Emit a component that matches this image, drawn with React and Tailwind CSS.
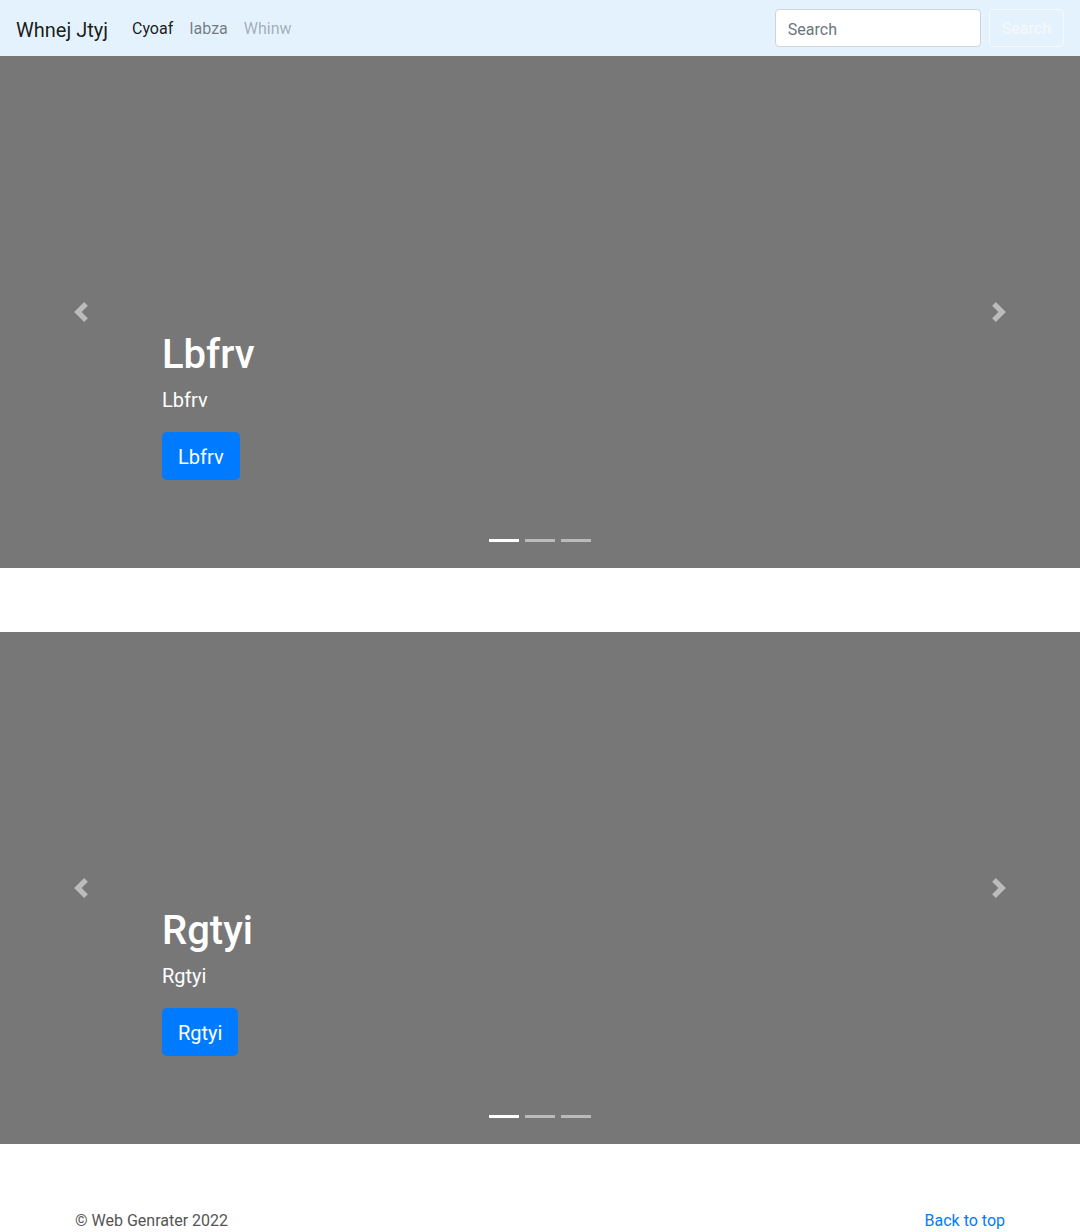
import React from 'react';

const font = "font-['Segoe_UI',Roboto,'Helvetica_Neue',Arial,sans-serif]";

function PrevIcon() {
  return (
    <svg width="20" height="20" viewBox="0 0 8 8" fill="#fff">
      <path d="M5.25 0l-4 4 4 4 1.5-1.5L4.25 4l2.5-2.5L5.25 0z" />
    </svg>
  );
}

function NextIcon() {
  return (
    <svg width="20" height="20" viewBox="0 0 8 8" fill="#fff">
      <path d="M2.75 0l-1.5 1.5L3.75 4l-2.5 2.5L2.75 8l4-4-4-4z" />
    </svg>
  );
}

function Carousel({ label }) {
  return (
    <div className="relative h-[512px] bg-[#777777] flex flex-col justify-end px-[15%] pb-[88px]">
      {/* Caption */}
      <div className="relative z-10 text-white">
        <h1 className="text-[40px] leading-[54px] font-medium mb-[2px]">{label}</h1>
        <p className="text-xl leading-[30px] pt-[1px] mb-[15px]">{label}</p>
        <a href="#" className="inline-block mt-[2px] bg-[#007bff] text-white text-xl leading-[30px] px-4 pt-[10px] pb-[8px] rounded-[5px]">
          {label}
        </a>
      </div>

      {/* Controls */}
      <button className="absolute left-0 top-0 bottom-0 w-[15%] flex items-center justify-center opacity-50">
        <PrevIcon />
      </button>
      <button className="absolute right-0 top-0 bottom-0 w-[15%] flex items-center justify-center opacity-50">
        <NextIcon />
      </button>

      {/* Indicators */}
      <div className="absolute bottom-[26px] left-0 right-0 flex justify-center gap-[6px]">
        <span className="w-[30px] h-[3px] bg-white" />
        <span className="w-[30px] h-[3px] bg-white opacity-50" />
        <span className="w-[30px] h-[3px] bg-white opacity-50" />
      </div>
    </div>
  );
}

export default function App() {
  return (
    <div className={`${font} text-[#212529] bg-white min-h-screen`}>
      {/* Navbar */}
      <nav className="h-14 bg-[#e3f2fd] flex items-center px-4">
        <a href="#" className="text-xl text-black/90 mr-4 pt-[3px]">Whnej Jtyj</a>
        <div className="flex items-center text-base pt-[2px]">
          <a href="#" className="px-2 text-black/90">Cyoaf</a>
          <a href="#" className="px-2 text-black/50">Iabza</a>
          <a href="#" className="px-2 text-black/30">Whinw</a>
        </div>
        <div className="ml-auto flex items-center gap-2">
          <input
            type="text"
            placeholder="Search"
            className="w-[206px] h-[38px] px-3 pt-[2px] bg-white border border-[#ced4da] rounded text-base placeholder:text-[#6c757d] outline-none"
          />
          <button className="h-[38px] px-3 pt-[2px] border border-[#f8f9fa] rounded text-[#f8f9fa] text-base">Search</button>
        </div>
      </nav>

      <Carousel label="Lbfrv" />
      <div className="h-16" />
      <Carousel label="Rgtyi" />

      {/* Footer */}
      <footer className="max-w-[960px] mx-auto px-[15px] mt-16 flex justify-between leading-6 text-base pt-[1px]">
        <p className="mb-4 text-[#555]">© Web Genrater 2022</p>
        <p className="mb-4"><a href="#" className="text-[#007bff]">Back to top</a></p>
      </footer>
    </div>
  );
}
